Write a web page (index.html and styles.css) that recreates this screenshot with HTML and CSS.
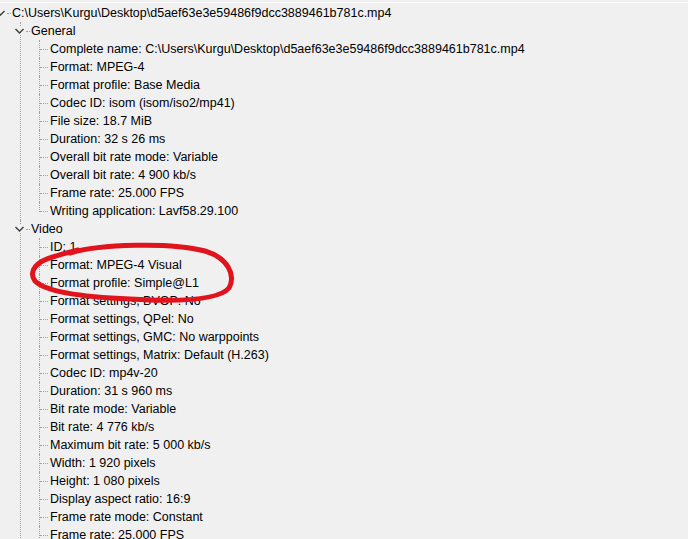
FILE: index.html
```html
<!DOCTYPE html>
<html>
<head>
<meta charset="utf-8">
<link rel="stylesheet" href="styles.css">
</head>
<body>
<div class="edge"></div>
<ul class="tree">
  <li class="node">
    <div class="row"><span class="tw"><span class="chev"><svg width="11" height="8" viewBox="0 0 11 8"><path d="M1.5 2 L5.5 6 L9.5 2"/></svg></span><span class="hl short"></span></span><span class="label">C:\Users\Kurgu\Desktop\d5aef63e3e59486f9dcc3889461b781c.mp4</span></div>
    <ul class="kids">
      <li class="node">
        <div class="row"><span class="tw"><span class="chev"><svg width="11" height="8" viewBox="0 0 11 8"><path d="M1.5 2 L5.5 6 L9.5 2"/></svg></span><span class="hl short"></span></span><span class="label">General</span></div>
        <ul class="kids">
          <li><div class="row"><span class="tw"><span class="hl"></span></span><span class="label">Complete name: C:\Users\Kurgu\Desktop\d5aef63e3e59486f9dcc3889461b781c.mp4</span></div></li>
          <li><div class="row"><span class="tw"><span class="hl"></span></span><span class="label">Format: MPEG-4</span></div></li>
          <li><div class="row"><span class="tw"><span class="hl"></span></span><span class="label">Format profile: Base Media</span></div></li>
          <li><div class="row"><span class="tw"><span class="hl"></span></span><span class="label">Codec ID: isom (isom/iso2/mp41)</span></div></li>
          <li><div class="row"><span class="tw"><span class="hl"></span></span><span class="label">File size: 18.7 MiB</span></div></li>
          <li><div class="row"><span class="tw"><span class="hl"></span></span><span class="label">Duration: 32 s 26 ms</span></div></li>
          <li><div class="row"><span class="tw"><span class="hl"></span></span><span class="label">Overall bit rate mode: Variable</span></div></li>
          <li><div class="row"><span class="tw"><span class="hl"></span></span><span class="label">Overall bit rate: 4 900 kb/s</span></div></li>
          <li><div class="row"><span class="tw"><span class="hl"></span></span><span class="label">Frame rate: 25.000 FPS</span></div></li>
          <li class="last"><div class="row"><span class="tw"><span class="hl"></span></span><span class="label">Writing application: Lavf58.29.100</span></div></li>
        </ul>
      </li>
      <li class="node">
        <div class="row"><span class="tw"><span class="chev"><svg width="11" height="8" viewBox="0 0 11 8"><path d="M1.5 2 L5.5 6 L9.5 2"/></svg></span><span class="hl short"></span></span><span class="label">Video</span></div>
        <ul class="kids">
          <li><div class="row"><span class="tw"><span class="hl"></span></span><span class="label">ID: 1</span></div></li>
          <li><div class="row"><span class="tw"><span class="hl"></span></span><span class="label">Format: MPEG-4 Visual</span></div></li>
          <li><div class="row"><span class="tw"><span class="hl"></span></span><span class="label">Format profile: Simple@L1</span></div></li>
          <li><div class="row"><span class="tw"><span class="hl"></span></span><span class="label">Format settings, BVOP: No</span></div></li>
          <li><div class="row"><span class="tw"><span class="hl"></span></span><span class="label">Format settings, QPel: No</span></div></li>
          <li><div class="row"><span class="tw"><span class="hl"></span></span><span class="label">Format settings, GMC: No warppoints</span></div></li>
          <li><div class="row"><span class="tw"><span class="hl"></span></span><span class="label">Format settings, Matrix: Default (H.263)</span></div></li>
          <li><div class="row"><span class="tw"><span class="hl"></span></span><span class="label">Codec ID: mp4v-20</span></div></li>
          <li><div class="row"><span class="tw"><span class="hl"></span></span><span class="label">Duration: 31 s 960 ms</span></div></li>
          <li><div class="row"><span class="tw"><span class="hl"></span></span><span class="label">Bit rate mode: Variable</span></div></li>
          <li><div class="row"><span class="tw"><span class="hl"></span></span><span class="label">Bit rate: 4 776 kb/s</span></div></li>
          <li><div class="row"><span class="tw"><span class="hl"></span></span><span class="label">Maximum bit rate: 5 000 kb/s</span></div></li>
          <li><div class="row"><span class="tw"><span class="hl"></span></span><span class="label">Width: 1 920 pixels</span></div></li>
          <li><div class="row"><span class="tw"><span class="hl"></span></span><span class="label">Height: 1 080 pixels</span></div></li>
          <li><div class="row"><span class="tw"><span class="hl"></span></span><span class="label">Display aspect ratio: 16:9</span></div></li>
          <li><div class="row"><span class="tw"><span class="hl"></span></span><span class="label">Frame rate mode: Constant</span></div></li>
          <li><div class="row"><span class="tw"><span class="hl"></span></span><span class="label">Frame rate: 25.000 FPS</span></div></li>
        </ul>
      </li>
    </ul>
  </li>
</ul>
<svg class="mark" width="688" height="539" viewBox="0 0 688 539">
  <path d="M70 253 C100 244 170 242 205 251 C228 258 236 275 229 288 C219 300 180 302 130 299 C80 297 46 292 35 281 C28 271 36 261 56 256 C62 254 70 252 78 250"/>
</svg>
</body>
</html>
```

FILE: styles.css
```css
* {
  box-sizing: border-box;
}

html,
body {
  margin: 0;
  padding: 0;
}

body {
  position: relative;
  width: 688px;
  height: 539px;
  overflow: hidden;
  background: #f0f0f0;
  font-family: "Liberation Sans", Arial, sans-serif;
  font-size: 12.5px;
  color: #000;
}

.edge {
  height: 3px;
  border-bottom: 1px solid #ffffff;
}

.tree,
.kids {
  list-style: none;
  margin: 0;
  padding: 0;
}

.tree {
  margin-top: 1px;
  margin-left: -8px;
}

.kids {
  padding-left: 19px;
}

.tree li {
  position: relative;
}

.kids > li::before {
  content: "";
  position: absolute;
  left: 9px;
  top: 0;
  bottom: 0;
  border-left: 1px dotted #a0a0a0;
}

.kids > li.last::before {
  bottom: auto;
  height: 10px;
}

.row {
  display: flex;
  align-items: center;
  height: 18px;
  line-height: 18px;
  white-space: nowrap;
}

.tw {
  position: relative;
  flex: none;
  width: 20px;
  height: 18px;
}

.chev {
  position: absolute;
  left: 3px;
  top: 5px;
  width: 11px;
  height: 8px;
  background: #f0f0f0;
  z-index: 1;
}

.chev svg {
  display: block;
}

.chev path {
  fill: none;
  stroke: #3c3c3c;
  stroke-width: 1.4;
}

.hl {
  position: absolute;
  top: 9px;
  left: 10px;
  width: 8px;
  border-top: 1px dotted #a0a0a0;
}

.hl.short {
  left: 15px;
  width: 4px;
}

.label {
  flex: none;
}

.mark {
  position: absolute;
  left: 0;
  top: 0;
  pointer-events: none;
}

.mark path {
  fill: none;
  stroke: #e1141e;
  stroke-width: 5;
  stroke-linecap: round;
  stroke-linejoin: round;
}
```
